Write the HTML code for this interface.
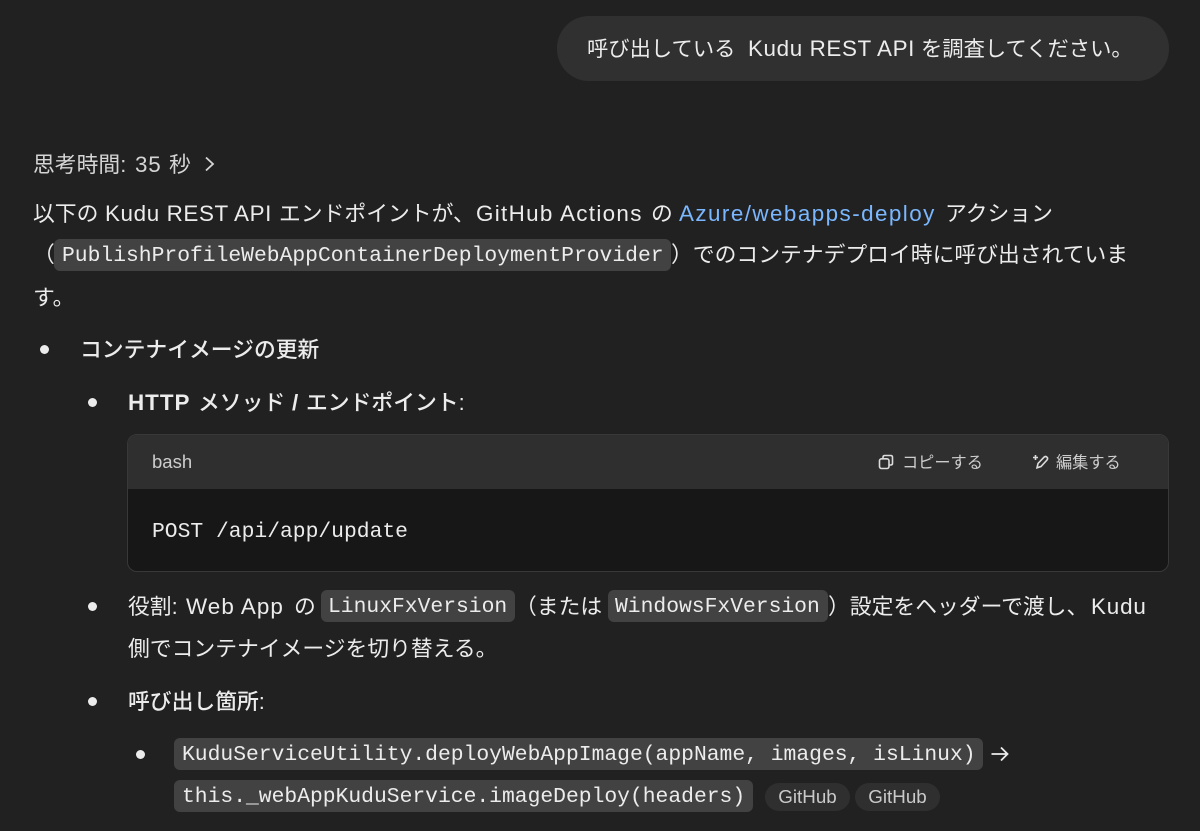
<!DOCTYPE html>
<html lang="ja"><head><meta charset="utf-8"><title>Kudu REST API</title>
<style>
html,body{margin:0;padding:0;background:#212121}
body{width:1200px;height:831px;position:relative;overflow:hidden;color:#ececec;font-family:"Liberation Sans","Noto Sans CJK JP",sans-serif;font-size:21.8px;line-height:30px}
.l{position:absolute;white-space:nowrap;margin-top:1px}
.e{font-size:22.4px}
.c{position:absolute;background:#424242;border-radius:6px;height:32px}
.m{position:absolute;white-space:nowrap;font-family:"Liberation Mono","DejaVu Sans Mono",monospace;font-size:21.33px;line-height:30px;color:#ececec}
.b{position:absolute;width:9px;height:9px;border-radius:50%;background:#ececec}
.p{position:absolute;background:#2f2f2f;border-radius:16px;height:28px;width:85px;top:783px;font-size:18.8px;line-height:28px;text-align:center;color:#c9c9c9}
.w{font-weight:500}
</style></head><body>
<div style="position:absolute;left:557px;top:16px;width:612px;height:65px;border-radius:32px;background:#303030"></div>
<div class="l" style="left:587px;top:33px;font-size:21.3px">呼び出している</div>
<div class="l e" style="left:748px;top:33px;letter-spacing:.62px">Kudu REST API</div>
<div class="l" style="left:921px;top:33px;font-size:21.3px">を調査してください。</div>

<div class="l" style="left:33px;top:149px;color:#d5d5d5">思考時間:</div>
<div class="l e" style="left:135px;top:149px;color:#d5d5d5;letter-spacing:.8px">35</div>
<div class="l" style="left:169px;top:149px;color:#d5d5d5">秒</div>
<svg style="position:absolute;left:203px;top:155px" width="14" height="18" viewBox="0 0 14 18"><path d="M3 2.500 L10 9 L3 15.500" fill="none" stroke="#d5d5d5" stroke-width="1.800"/></svg>

<div class="l" style="left:33px;top:198px">以下の</div>
<div class="l e" style="left:105px;top:198px;letter-spacing:.62px">Kudu REST API</div>
<div class="l" style="left:279px;top:198px">エンドポイントが、</div>
<div class="l e" style="left:476px;top:198px;letter-spacing:1.33px">GitHub Actions</div>
<div class="l" style="left:651px;top:198px">の</div>
<div class="l e" style="left:679px;top:198px;letter-spacing:1.45px;color:#7ab7ff">Azure/webapps-deploy</div>
<div class="l" style="left:945px;top:198px">アクション</div>

<div class="l" style="left:33px;top:239px">（</div>
<div class="c" style="left:54px;top:239px;width:617px"></div>
<div class="m" style="left:62px;top:241px">PublishProfileWebAppContainerDeploymentProvider</div>
<div class="l" style="left:671px;top:239px">）でのコンテナデプロイ時に呼び出されていま</div>
<div class="l" style="left:33px;top:282px">す。</div>

<div class="b" style="left:40px;top:345px"></div>
<div class="l w" style="left:80px;top:334px">コンテナイメージの更新</div>

<div class="b" style="left:88px;top:398px"></div>
<div class="l e" style="left:128px;top:387px;font-weight:bold;letter-spacing:1px">HTTP</div>
<div class="l w" style="left:198px;top:387px">メソッド</div>
<div class="l e" style="left:292px;top:387px;font-weight:bold">/</div>
<div class="l w" style="left:306px;top:387px">エンドポイント<span style="font-weight:400">:</span></div>

<div style="position:absolute;left:127px;top:434px;width:1040px;height:136px;border:1px solid #383838;border-radius:10px;background:#171717;overflow:hidden">
<div style="height:54px;background:#2f2f2f"></div>
</div>
<div class="l" style="left:152px;top:446px;font-size:18.500px;color:#cdcdcd">bash</div>
<svg style="position:absolute;left:878px;top:454px" width="16" height="16" viewBox="0 0 16 16" fill="none" stroke="#dcdcdc" stroke-width="1.600"><rect x="1.500" y="4.800" width="9.500" height="9.700" rx="2"/><path d="M5 4.500 V3.300 Q5 1.500 6.800 1.500 H12.700 Q14.500 1.500 14.500 3.300 V9.300 Q14.500 11 12.800 11 H11.200"/></svg>
<div class="l" style="left:902px;top:447px;font-size:16.200px;color:#cdcdcd">コピーする</div>
<svg style="position:absolute;left:1032px;top:453px" width="18" height="18" viewBox="0 0 18 18" fill="none" stroke="#dcdcdc" stroke-width="1.600"><path d="M5 14.800 L6 10.500 L12 4.200 Q13.500 2.800 15 4.200 Q16.200 5.500 15 7 L9 13.500 Z"/><path d="M3.500 2 V7 M1 4.500 H6"/></svg>
<div class="l" style="left:1056px;top:447px;font-size:16.200px;color:#cdcdcd">編集する</div>
<div class="m" style="left:152px;top:517px">POST /api/app/update</div>

<div class="b" style="left:88px;top:602px"></div>
<div class="l" style="left:128px;top:591px">役割:</div>
<div class="l e" style="left:186px;top:591px;letter-spacing:1.07px">Web App</div>
<div class="l" style="left:294px;top:591px">の</div>
<div class="c" style="left:321px;top:590px;width:194px"></div>
<div class="m" style="left:328px;top:592px">LinuxFxVersion</div>
<div class="l" style="left:515px;top:591px">（または</div>
<div class="c" style="left:608px;top:590px;width:220px"></div>
<div class="m" style="left:615px;top:592px">WindowsFxVersion</div>
<div class="l" style="left:828px;top:591px">）設定をヘッダーで渡し、</div>
<div class="l e" style="left:1091px;top:591px;letter-spacing:.85px">Kudu</div>
<div class="l" style="left:128px;top:633px">側でコンテナイメージを切り替える。</div>

<div class="b" style="left:88px;top:697px"></div>
<div class="l w" style="left:128px;top:686px">呼び出し箇所<span style="font-weight:400">:</span></div>

<div class="b" style="left:136px;top:750px"></div>
<div class="c" style="left:174px;top:738px;width:809px"></div>
<div class="m" style="left:182px;top:740px">KuduServiceUtility.deployWebAppImage(appName, images, isLinux)</div>
<svg style="position:absolute;left:990px;top:744px" width="20" height="20" viewBox="0 0 20 20" fill="none" stroke="#ececec" stroke-width="1.800"><path d="M1.500 10 H17 M11 3.500 L17.500 10 L11 16.500"/></svg>
<div class="c" style="left:174px;top:780px;width:579px"></div>
<div class="m" style="left:182px;top:782px">this._webAppKuduService.imageDeploy(headers)</div>
<div class="p" style="left:765px">GitHub</div>
<div class="p" style="left:855px">GitHub</div>
</body></html>
